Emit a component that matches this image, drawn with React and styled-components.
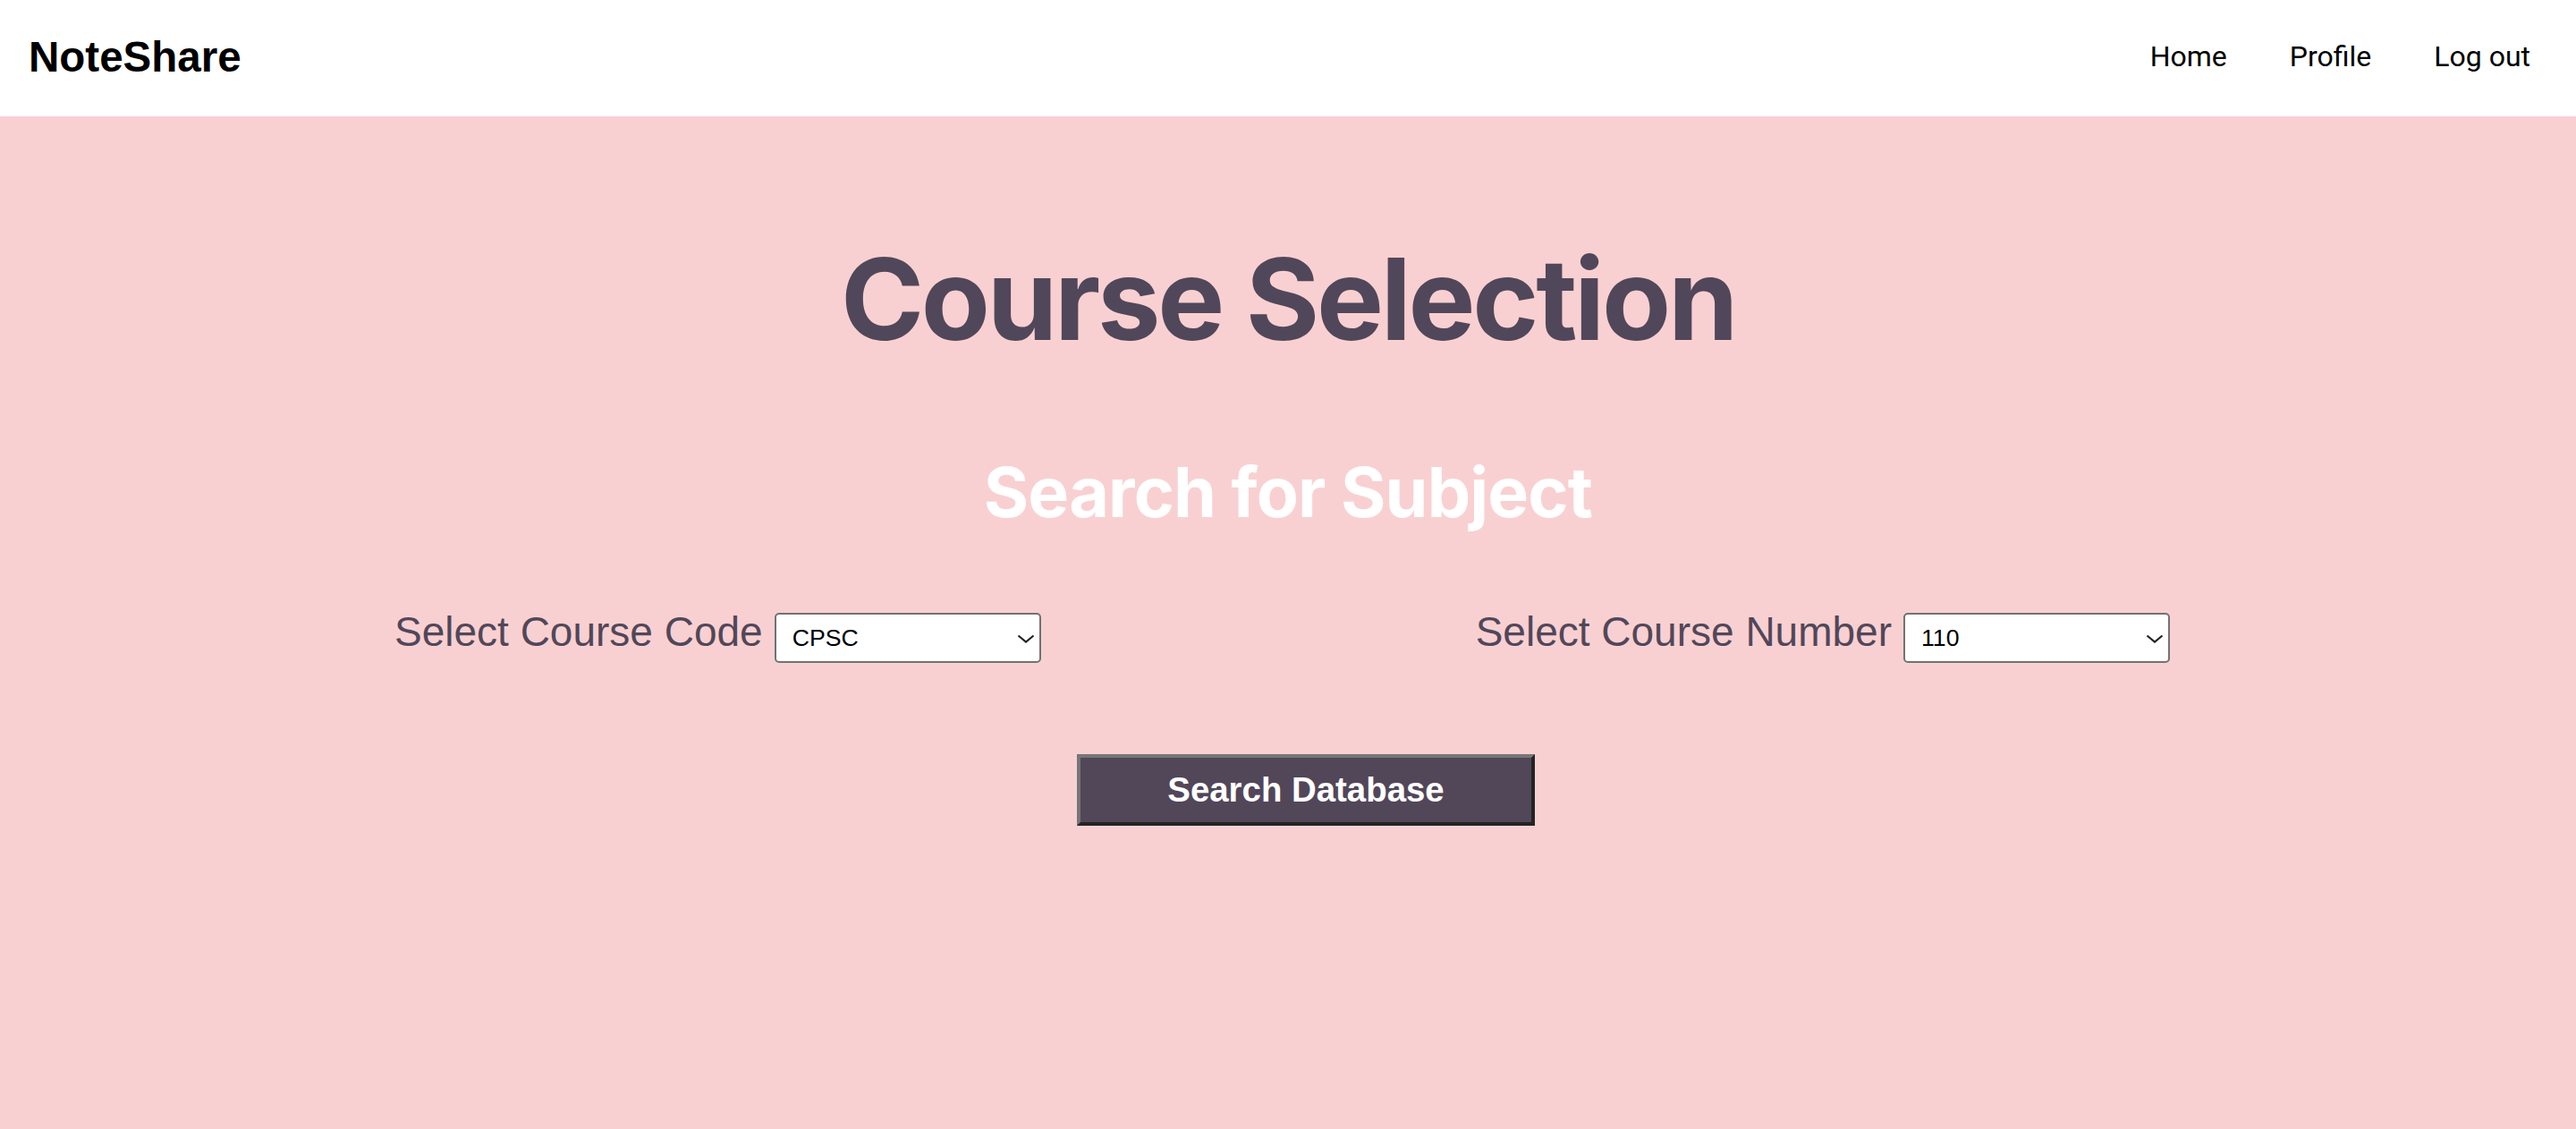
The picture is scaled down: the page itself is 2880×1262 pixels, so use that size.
import React, { useState } from 'react'
import styled, { createGlobalStyle } from 'styled-components'

const GlobalStyle = createGlobalStyle`
  * { box-sizing: border-box; }
  html, body {
    margin: 0;
    padding: 0;
    background: #f9d0d1;
  }
  body {
    font-family: "Liberation Sans", Arial, sans-serif;
  }
`

const Page = styled.div`
  min-height: 1262px;
  display: flex;
  flex-direction: column;
  background: #f9d0d1;
`

const Header = styled.header`
  height: 130px;
  background: #ffffff;
  display: flex;
  align-items: center;
  justify-content: space-between;
  padding: 0 51px 4px 32px;
`

const Brand = styled.div`
  font-family: "Liberation Sans", Arial, sans-serif;
  font-weight: 700;
  font-size: 47.5px;
  color: #000;
`

const Nav = styled.nav`
  display: flex;
  gap: 70px;
`

const NavLink = styled.a`
  font-family: Roboto, "Liberation Sans", sans-serif;
  font-size: 32px;
  color: #000;
  text-decoration: none;
  cursor: pointer;
`

const Main = styled.main`
  display: flex;
  flex-direction: column;
  align-items: center;
`

const Title = styled.h1`
  margin: 141px 0 0;
  font-family: Inter, "Liberation Sans", sans-serif;
  font-weight: 700;
  font-size: 126px;
  line-height: 1;
  letter-spacing: -0.026em;
  color: #51475a;
`

const Subtitle = styled.h2`
  margin: 115px 0 0;
  font-family: Inter, "Liberation Sans", sans-serif;
  font-weight: 700;
  font-size: 77px;
  line-height: 1;
  letter-spacing: -0.011em;
  color: #ffffff;
`

const SelectRow = styled.div`
  align-self: stretch;
  display: flex;
  justify-content: space-between;
  align-items: baseline;
  padding: 0 454px 0 441px;
  margin-top: 90px;
`

const Field = styled.label`
  display: flex;
  align-items: baseline;
  gap: 13px;
  font-family: "Liberation Sans", Arial, sans-serif;
  font-size: 46px;
  color: #51475a;
`

const SelectWrap = styled.span`
  position: relative;
  display: inline-flex;
  align-items: baseline;
`

const Select = styled.select`
  appearance: none;
  -webkit-appearance: none;
  width: 298px;
  height: 56px;
  padding: 0 40px 0 18px;
  background: #ffffff;
  border: 2px solid #727272;
  border-radius: 5px;
  font-family: "Liberation Sans", Arial, sans-serif;
  font-size: 26.67px;
  color: #000;
  outline: none;
`

const Chevron = styled.svg`
  position: absolute;
  right: 7px;
  top: 24px;
  width: 20px;
  height: 10px;
  pointer-events: none;
`

const SearchButton = styled.button`
  margin: 102px 0 0 40px;
  width: 512px;
  height: 80px;
  background: #524659;
  border: 4px solid;
  border-color: #767676 #232323 #232323 #767676;
  font-family: "Liberation Sans", Arial, sans-serif;
  font-weight: 700;
  font-size: 38.4px;
  color: #ffffff;
  cursor: pointer;
`

const Dropdown = ({ value, onChange, options }) => (
  <SelectWrap>
    <Select value={value} onChange={(e) => onChange(e.target.value)}>
      {options.map((o) => (
        <option key={o} value={o}>{o}</option>
      ))}
    </Select>
    <Chevron viewBox="0 0 20 10">
      <path d="M1.5 1.5 L10 8.5 L18.5 1.5" fill="none" stroke="#222" strokeWidth="2.2" />
    </Chevron>
  </SelectWrap>
)

const App = () => {
  const [code, setCode] = useState('CPSC')
  const [num, setNum] = useState('110')

  return (
    <>
      <GlobalStyle />
      <Page>
        <Header>
          <Brand>NoteShare</Brand>
          <Nav>
            <NavLink>Home</NavLink>
            <NavLink>Profile</NavLink>
            <NavLink>Log out</NavLink>
          </Nav>
        </Header>
        <Main>
          <Title>Course Selection</Title>
          <Subtitle>Search for Subject</Subtitle>
          <SelectRow>
            <Field>
              Select Course Code
              <Dropdown value={code} onChange={setCode} options={['CPSC', 'MATH', 'STAT', 'PHYS']} />
            </Field>
            <Field>
              Select Course Number
              <Dropdown value={num} onChange={setNum} options={['110', '121', '210', '221']} />
            </Field>
          </SelectRow>
          <SearchButton>Search Database</SearchButton>
        </Main>
      </Page>
    </>
  )
}

export default App
